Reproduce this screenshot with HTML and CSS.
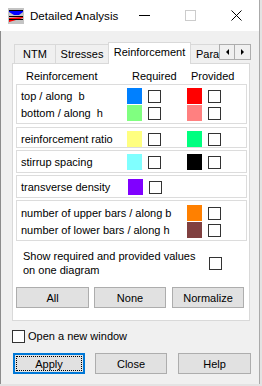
FILE: index.html
```html
<!DOCTYPE html>
<html lang="en">
<head>
    <meta charset="UTF-8">
    <meta name="viewport" content="width=device-width, initial-scale=1.0">
    <title>Detailed Analysis</title>
    <link rel="stylesheet" href="styles.css">
</head>
<body>
    <div class="window">
        <!-- Title bar -->
        <div class="titlebar">
            <svg class="app-icon" width="16" height="16" viewBox="0 0 16 16">
                <rect x="0" y="0" width="16" height="16" fill="#c4c4c4"/>
                <polygon points="1,2 15,2 15,4 11,7 6,7 1,4" fill="#0000ff"/>
                <line x1="1" y1="2.5" x2="15" y2="2.5" stroke="#000" stroke-width="1"/>
                <line x1="1" y1="8.5" x2="15" y2="8.5" stroke="#000" stroke-width="1"/>
                <polygon points="1,14 1,10 15,9 15,10" fill="#ff0000"/>
                <line x1="1" y1="11.5" x2="15" y2="11.5" stroke="#000" stroke-width="1"/>
            </svg>
            <span class="title">Detailed Analysis</span>
            <div class="caption-buttons">
                <span class="cap">
                    <svg width="11" height="11" viewBox="0 0 11 11"><line x1="0" y1="5.5" x2="11" y2="5.5" stroke="#000"/></svg>
                </span>
                <span class="cap">
                    <svg width="11" height="11" viewBox="0 0 11 11"><rect x="0.5" y="0.5" width="10" height="10" fill="none" stroke="#cccccc"/></svg>
                </span>
                <span class="cap">
                    <svg width="11" height="11" viewBox="0 0 11 11"><path d="M0.5 0.5 L10.5 10.5 M10.5 0.5 L0.5 10.5" stroke="#000" stroke-width="1"/></svg>
                </span>
            </div>
        </div>

        <div class="client">
            <!-- Tabs -->
            <div class="tabs">
                <div class="tab tab-ntm">NTM</div>
                <div class="tab tab-stresses">Stresses</div>
                <div class="tab tab-active">Reinforcement</div>
                <div class="tab tab-para">Para</div>
                <div class="tab-scroll">
                    <span class="scroll-btn"><span class="tri-left"></span></span>
                    <span class="scroll-btn"><span class="tri-right"></span></span>
                </div>
            </div>

            <div class="panel">
                <div class="head-row">
                    <span class="head-label">Reinforcement</span>
                    <span class="head-req">Required</span>
                    <span class="head-prov">Provided</span>
                </div>

                <div class="group">
                    <div class="row">
                        <span class="label">top / along&nbsp; b</span>
                        <span class="cell"><span class="swatch c-blue"></span><span class="check"></span></span>
                        <span class="cell"><span class="swatch c-red"></span><span class="check"></span></span>
                    </div>
                    <div class="row">
                        <span class="label">bottom / along&nbsp; h</span>
                        <span class="cell"><span class="swatch c-lime"></span><span class="check"></span></span>
                        <span class="cell"><span class="swatch c-pink"></span><span class="check"></span></span>
                    </div>
                </div>

                <div class="group group-short">
                    <div class="row">
                        <span class="label">reinforcement ratio</span>
                        <span class="cell"><span class="swatch c-yellow"></span><span class="check"></span></span>
                        <span class="cell"><span class="swatch c-green"></span><span class="check"></span></span>
                    </div>
                </div>

                <div class="group">
                    <div class="row">
                        <span class="label">stirrup spacing</span>
                        <span class="cell"><span class="swatch c-cyan"></span><span class="check"></span></span>
                        <span class="cell"><span class="swatch c-black"></span><span class="check"></span></span>
                    </div>
                </div>

                <div class="group">
                    <div class="row">
                        <span class="label">transverse density</span>
                        <span class="cell"><span class="swatch c-purple"></span><span class="check"></span></span>
                    </div>
                </div>

                <div class="group group-bars">
                    <div class="row">
                        <span class="label label-wide">number of upper bars / along b</span>
                        <span class="cell"><span class="swatch c-orange"></span><span class="check"></span></span>
                    </div>
                    <div class="row">
                        <span class="label label-wide">number of lower bars / along h</span>
                        <span class="cell"><span class="swatch c-brown"></span><span class="check"></span></span>
                    </div>
                </div>

                <div class="combine">
                    <span class="combine-text">Show required and provided values on one diagram</span>
                    <span class="check"></span>
                </div>

                <div class="panel-buttons">
                    <button class="btn btn-all">All</button>
                    <button class="btn btn-none">None</button>
                    <button class="btn btn-norm">Normalize</button>
                </div>
            </div>

            <label class="new-window">
                <span class="check"></span>
                <span>Open a new window</span>
            </label>

            <div class="dialog-buttons">
                <button class="btn btn-default"><span class="focus">Apply</span></button>
                <button class="btn">Close</button>
                <button class="btn">Help</button>
            </div>
        </div>
    </div>
</body>
</html>
```

FILE: styles.css
```css
/* Dialog window */
body {
    margin: 0;
    background-color: #e3e3e3;
    font-family: "Liberation Sans", Arial, sans-serif;
    font-size: 11px;
    color: #000;
}

.window {
    width: 259px;
    height: 384px;
    background-color: #f0f0f0;
    border-right: 1px solid #aaaaaa;
    box-sizing: content-box;
}

.titlebar {
    height: 31px;
    background-color: #fff;
    display: flex;
    align-items: center;
}

.app-icon {
    margin-left: 8px;
    margin-top: 1px;
}

.title {
    margin-left: 6px;
    font-size: 11.6px;
    flex: 1;
}

.caption-buttons {
    display: flex;
    height: 31px;
}

.cap {
    width: 46px;
    display: flex;
    align-items: center;
    justify-content: center;
}

.client {
    border-left: 1px solid #8c8c8c;
    height: 353px;
    box-sizing: border-box;
    padding: 11px 0 0 11px;
}

/* Tabs */
.tabs {
    display: flex;
    align-items: flex-end;
    height: 21px;
    position: relative;
    z-index: 1;
}

.tab {
    height: 19px;
    box-sizing: border-box;
    border: 1px solid #d9d9d9;
    border-bottom: none;
    background-color: #f0f0f0;
    margin-right: -1px;
    text-align: center;
    line-height: 18px;
    white-space: nowrap;
}

.tab-ntm {
    margin-left: 2px;
    width: 42px;
}

.tab-stresses {
    width: 54px;
}

.tab-active {
    width: 83px;
    height: 22px;
    margin-bottom: -1px;
    background-color: #fff;
    line-height: 18px;
    position: relative;
    z-index: 2;
}

.tab-para {
    width: 30px;
    text-align: left;
    padding-left: 5px;
    border-right: none;
}

.tab-scroll {
    display: flex;
    align-self: flex-start;
    margin-top: 2px;
}

.scroll-btn {
    width: 16px;
    height: 16px;
    box-sizing: border-box;
    border: 1px solid #adadad;
    background-color: #f0f0f0;
    display: flex;
    align-items: center;
    justify-content: center;
}

.scroll-btn + .scroll-btn {
    border-left: none;
}

.tri-left {
    width: 0;
    height: 0;
    border-top: 3px solid transparent;
    border-bottom: 3px solid transparent;
    border-right: 3px solid #000;
}

.tri-right {
    width: 0;
    height: 0;
    border-top: 3px solid transparent;
    border-bottom: 3px solid transparent;
    border-left: 3px solid #000;
}

/* Tab page */
.panel {
    width: 238px;
    height: 258px;
    box-sizing: border-box;
    background-color: #fff;
    border: 1px solid #d9d9d9;
    padding: 0 2px 0 3px;
}

.head-row {
    display: flex;
    height: 20px;
    padding-top: 5px;
    box-sizing: border-box;
    line-height: 15px;
}

.head-label {
    width: 106px;
    padding-left: 10px;
}

.head-req {
    width: 59px;
}

.group {
    border: 1px solid #dcdcdc;
    padding: 3px 0 2px;
    margin-bottom: 2px;
    display: flex;
    flex-direction: column;
    gap: 1px;
}

.group:nth-of-type(2) {
    margin-bottom: 3px;
}

.group-short {
    padding-bottom: 0;
}

.group-bars {
    padding-top: 4px;
}

.row {
    display: flex;
    align-items: center;
    height: 16px;
}

.label {
    width: 111px;
    box-sizing: border-box;
    padding-left: 4px;
    white-space: nowrap;
}

.label-wide {
    width: 171px;
}

.cell {
    width: 60px;
    display: flex;
    align-items: center;
    gap: 6px;
}

.swatch {
    width: 15px;
    height: 16px;
}

.check {
    width: 13px;
    height: 13px;
    box-sizing: border-box;
    border: 1px solid #333;
    background-color: #fff;
    flex-shrink: 0;
}

.c-blue { background-color: #0080ff; }
.c-red { background-color: #ff0000; }
.c-lime { background-color: #80ff80; }
.c-pink { background-color: #ff8080; }
.c-yellow { background-color: #ffff80; }
.c-green { background-color: #00ff80; }
.c-cyan { background-color: #80ffff; }
.c-black { background-color: #000; }
.c-purple { background-color: #8000ff; }
.c-orange { background-color: #ff8000; }
.c-brown { background-color: #804040; }

.combine {
    display: flex;
    align-items: center;
    margin-top: 9px;
    padding-left: 7px;
}

.combine-text {
    width: 186px;
    line-height: 13.5px;
}

.panel-buttons {
    display: flex;
    gap: 5px;
    margin-top: 10px;
    padding-left: 0;
}

/* Buttons */
.btn {
    width: 72px;
    height: 21px;
    padding: 0;
    background-color: #e1e1e1;
    border: 1px solid #adadad;
    font-family: inherit;
    font-size: 11px;
    color: #000;
}

.btn-all {
    width: 73px;
}

.btn-none {
    margin-right: 1px;
}

.new-window {
    display: flex;
    align-items: center;
    gap: 3px;
    margin-top: 8px;
    height: 14px;
}

.new-window .check {
    width: 13px;
    height: 13px;
    border-color: #333;
}

.dialog-buttons {
    display: flex;
    gap: 10px;
    margin-top: 10px;
    padding-left: 1px;
}

.dialog-buttons .btn:last-child {
    margin-left: 1px;
    width: 73px;
}

.btn-default {
    border: 2px solid #0078d7;
    padding: 1px;
}

.focus {
    display: block;
    height: 100%;
    box-sizing: border-box;
    border: 1px dotted #000;
    line-height: 15px;
}
```
